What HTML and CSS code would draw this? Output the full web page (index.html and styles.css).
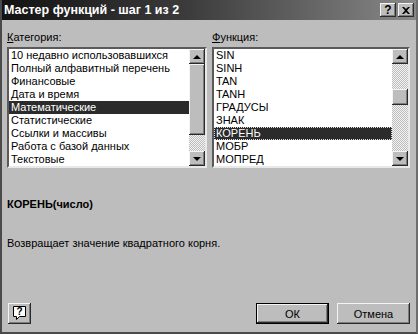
FILE: index.html
```html
<!DOCTYPE html>
<html>
<head>
    <title>Мастер функций</title>
    <link rel="stylesheet" href="styles.css">
</head>
<body>
    <div class="dialog">
        <div class="titlebar">
            <span class="title">Мастер функций - шаг 1 из 2</span>
            <div class="caption-buttons">
                <div class="cbtn">?</div>
                <div class="cbtn">
                    <svg width="8" height="7" viewBox="0 0 8 7"><path d="M0 0h2l2 2 2-2h2L5 3.5 8 7H6L4 5 2 7H0l3-3.5z" fill="#000"/></svg>
                </div>
            </div>
        </div>

        <div class="content">
            <div class="lists">
                <div class="group group-left">
                    <div class="label"><u>К</u>атегория:</div>
                    <div class="listbox">
                        <div class="items">
                            <div class="item">10 недавно использовавшихся</div>
                            <div class="item">Полный алфавитный перечень</div>
                            <div class="item">Финансовые</div>
                            <div class="item">Дата и время</div>
                            <div class="item selected">Математические</div>
                            <div class="item">Статистические</div>
                            <div class="item">Ссылки и массивы</div>
                            <div class="item">Работа с базой данных</div>
                            <div class="item">Текстовые</div>
                        </div>
                        <div class="scrollbar">
                            <div class="sbtn"><span class="arrow up"></span></div>
                            <div class="thumb thumb-left"></div>
                            <div class="track"></div>
                            <div class="sbtn"><span class="arrow down"></span></div>
                        </div>
                    </div>
                </div>

                <div class="group group-right">
                    <div class="label"><u>Ф</u>ункция:</div>
                    <div class="listbox">
                        <div class="items">
                            <div class="item">SIN</div>
                            <div class="item">SINH</div>
                            <div class="item">TAN</div>
                            <div class="item">TANH</div>
                            <div class="item">ГРАДУСЫ</div>
                            <div class="item">ЗНАК</div>
                            <div class="item selected focused">КОРЕНЬ</div>
                            <div class="item">МОБР</div>
                            <div class="item">МОПРЕД</div>
                        </div>
                        <div class="scrollbar">
                            <div class="sbtn"><span class="arrow up"></span></div>
                            <div class="track track-top"></div>
                            <div class="thumb thumb-right"></div>
                            <div class="track"></div>
                            <div class="sbtn"><span class="arrow down"></span></div>
                        </div>
                    </div>
                </div>
            </div>

            <div class="signature">КОРЕНЬ(число)</div>
            <div class="description">Возвращает значение квадратного корня.</div>

            <div class="footer">
                <div class="button help-button">
                    <svg width="13" height="15" viewBox="0 0 13 15">
                        <path d="M0.5 0.5h12v10h-6l-3 3v-3h-3z" fill="#fff" stroke="#000"/>
                        <text x="6.5" y="9" font-family="Liberation Sans, sans-serif" font-size="10" font-weight="bold" text-anchor="middle">?</text>
                    </svg>
                </div>
                <div class="spacer"></div>
                <div class="button default">ОК</div>
                <div class="button">Отмена</div>
            </div>
        </div>
    </div>
</body>
</html>
```

FILE: styles.css
```css
body {
    margin: 0;
    padding: 0;
    font-family: "Liberation Sans", Arial, sans-serif;
    font-size: 11px;
    color: #000;
    background-color: #bdbdbd;
}

.dialog {
    width: 418px;
    height: 334px;
    box-sizing: border-box;
    background-color: #bdbdbd;
    border-left: 2px solid #4a4a4a;
    border-right: 2px solid #6e6e6e;
    border-bottom: 2px solid #4a4a4a;
    display: flex;
    flex-direction: column;
}

.titlebar {
    height: 20px;
    display: flex;
    align-items: center;
    padding: 0 2px 0 2px;
    background: linear-gradient(to right, #121212, #3c3c3c 45%, #888 100%);
}

.title {
    color: #fff;
    font-weight: bold;
    font-size: 12.5px;
    flex: 1;
}

.caption-buttons {
    display: flex;
    gap: 2px;
}

.cbtn {
    width: 16px;
    height: 14px;
    box-sizing: border-box;
    background-color: #bdbdbd;
    box-shadow: inset -1px -1px #2a2a2a, inset 1px 1px #f4f4f4, inset -2px -2px #7c7c7c;
    display: flex;
    align-items: center;
    justify-content: center;
    font-weight: bold;
    font-size: 12px;
    line-height: 14px;
}

.content {
    flex: 1;
    display: flex;
    flex-direction: column;
    padding: 0 6px 0 5px;
}

.lists {
    display: flex;
    gap: 5px;
    margin-top: 10px;
}

.group-left {
    width: 200px;
}

.group-right {
    width: 198px;
}

.label {
    height: 17px;
    line-height: 14px;
}

.listbox {
    display: flex;
    height: 121px;
    box-sizing: border-box;
    background-color: #fff;
    border: 2px solid;
    border-color: #5a5a5a #e8e8e8 #e8e8e8 #5a5a5a;
}

.items {
    flex: 1;
    overflow: hidden;
}

.item {
    height: 13px;
    line-height: 13px;
    padding-left: 2px;
    white-space: nowrap;
}

.item.selected {
    background-color: #2b2b2b;
    color: #fff;
}

.item.focused {
    outline: 1px dotted #e0e0e0;
    outline-offset: -1px;
}

.scrollbar {
    width: 16px;
    display: flex;
    flex-direction: column;
}

.sbtn {
    height: 15px;
    box-sizing: border-box;
    background-color: #bdbdbd;
    box-shadow: inset -1px -1px #2a2a2a, inset 1px 1px #f4f4f4, inset -2px -2px #7c7c7c;
    display: flex;
    align-items: center;
    justify-content: center;
}

.arrow {
    width: 0;
    height: 0;
    border-left: 4px solid transparent;
    border-right: 4px solid transparent;
}

.arrow.up {
    border-bottom: 4px solid #000;
}

.arrow.down {
    border-top: 4px solid #000;
}

.thumb {
    background-color: #bdbdbd;
    box-shadow: inset -1px -1px #2a2a2a, inset 1px 1px #f4f4f4, inset -2px -2px #7c7c7c;
}

.thumb-left {
    height: 71px;
}

.thumb-right {
    height: 16px;
}

.track {
    flex: 1;
    background: repeating-conic-gradient(#bdbdbd 0 25%, #f2f2f2 0 50%) 0 0 / 2px 2px;
}

.track-top {
    flex: none;
    height: 25px;
}

.signature {
    font-weight: bold;
    margin-top: 29px;
    line-height: 14px;
}

.description {
    margin-top: 25px;
    line-height: 14px;
}

.footer {
    display: flex;
    gap: 8px;
    margin-top: auto;
    margin-bottom: 8px;
    padding-left: 1px;
}

.spacer {
    flex: 1;
}

.button {
    width: 73px;
    height: 21px;
    box-sizing: border-box;
    background-color: #bdbdbd;
    box-shadow: inset -1px -1px #2a2a2a, inset 1px 1px #f4f4f4, inset -2px -2px #7c7c7c;
    display: flex;
    align-items: center;
    justify-content: center;
}

.button.default {
    box-shadow: inset 0 0 0 1px #000, inset -2px -2px #2a2a2a, inset 2px 2px #f4f4f4, inset -3px -3px #7c7c7c;
}

.help-button {
    width: 23px;
}
```
